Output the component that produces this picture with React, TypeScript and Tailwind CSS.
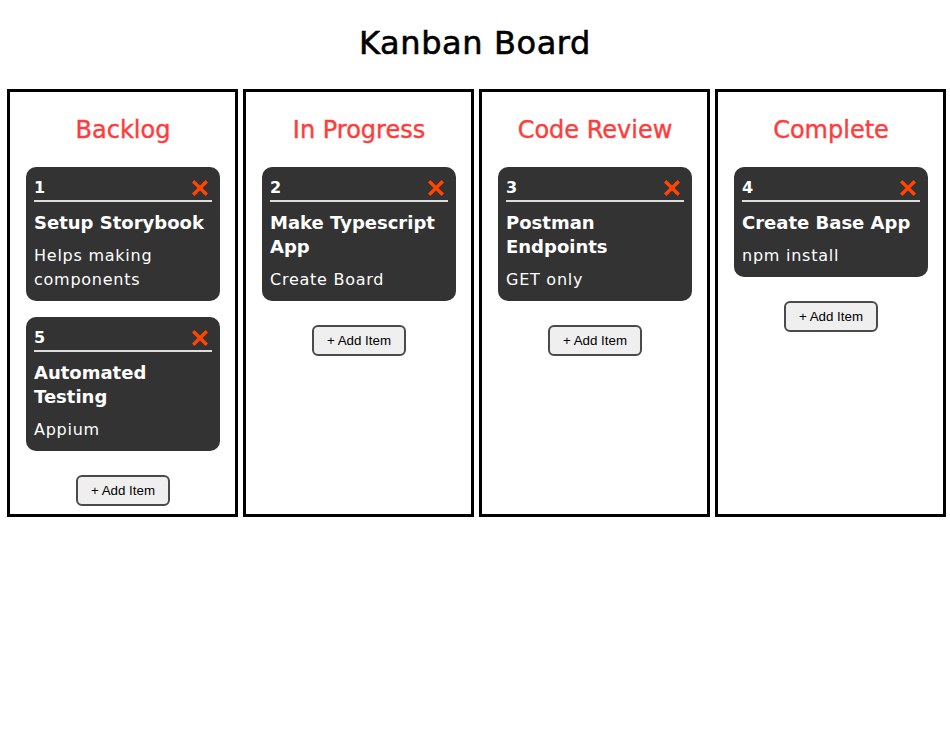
import React from "react";

type Item = { id: number; title: string; description: string };
type Column = { name: string; items: Item[] };

const columns: Column[] = [
  {
    name: "Backlog",
    items: [
      { id: 1, title: "Setup Storybook", description: "Helps making components" },
      { id: 5, title: "Automated Testing", description: "Appium" },
    ],
  },
  {
    name: "In Progress",
    items: [{ id: 2, title: "Make Typescript App", description: "Create Board" }],
  },
  {
    name: "Code Review",
    items: [{ id: 3, title: "Postman Endpoints", description: "GET only" }],
  },
  {
    name: "Complete",
    items: [{ id: 4, title: "Create Base App", description: "npm install" }],
  },
];

function CloseIcon() {
  return (
    <svg width="18" height="18" viewBox="0 0 18 18" className="mr-[3px] block">
      <path d="M2.2 2.2L15.8 15.8M15.8 2.2L2.2 15.8" stroke="#ff4500" strokeWidth={3.4} />
    </svg>
  );
}

function Card({ item }: { item: Item }) {
  return (
    <div className="rounded-[10px] bg-[#333333] px-2 pt-2 pb-[9px] text-white">
      <div className="flex h-[27px] items-center justify-between border-b-2 border-[#dddddd]">
        <span className="text-base font-bold leading-6">{item.id}</span>
        <CloseIcon />
      </div>
      <h3 className="my-[9px] text-lg font-bold leading-6">{item.title}</h3>
      <p className="text-base font-normal leading-6 tracking-[0.75px]">{item.description}</p>
    </div>
  );
}

function BoardColumn({ column }: { column: Column }) {
  return (
    <div className="flex w-[231px] flex-col border-[3px] border-black pb-2 pl-4 pr-[15px]">
      <h2 className="mt-[22px] mb-[21px] text-center text-2xl font-normal leading-8 text-[#ff3c3c] [-webkit-text-stroke:0.4px_#ff3c3c]">
        {column.name}
      </h2>
      <div className="flex flex-col gap-4">
        {column.items.map((item) => (
          <Card key={item.id} item={item} />
        ))}
      </div>
      <div className="mt-6 flex justify-center">
        <button className="rounded-md border-2 border-[#4a4a4a] bg-[#efefef] px-[13px] py-1.5 font-['Liberation_Sans',Arial,sans-serif] text-[13.33px] leading-[15px] text-black">
          + Add Item
        </button>
      </div>
    </div>
  );
}

export default function App() {
  return (
    <div className="min-h-screen bg-white font-['DejaVu_Sans',sans-serif] text-black">
      <h1 className="pt-[19px] mb-[22px] text-center text-[32px] font-normal leading-[48px] tracking-[0.6px] [-webkit-text-stroke:0.6px_#000]">
        Kanban Board
      </h1>
      <div className="flex items-stretch gap-[5px] pl-[7px]">
        {columns.map((column) => (
          <BoardColumn key={column.name} column={column} />
        ))}
      </div>
    </div>
  );
}
